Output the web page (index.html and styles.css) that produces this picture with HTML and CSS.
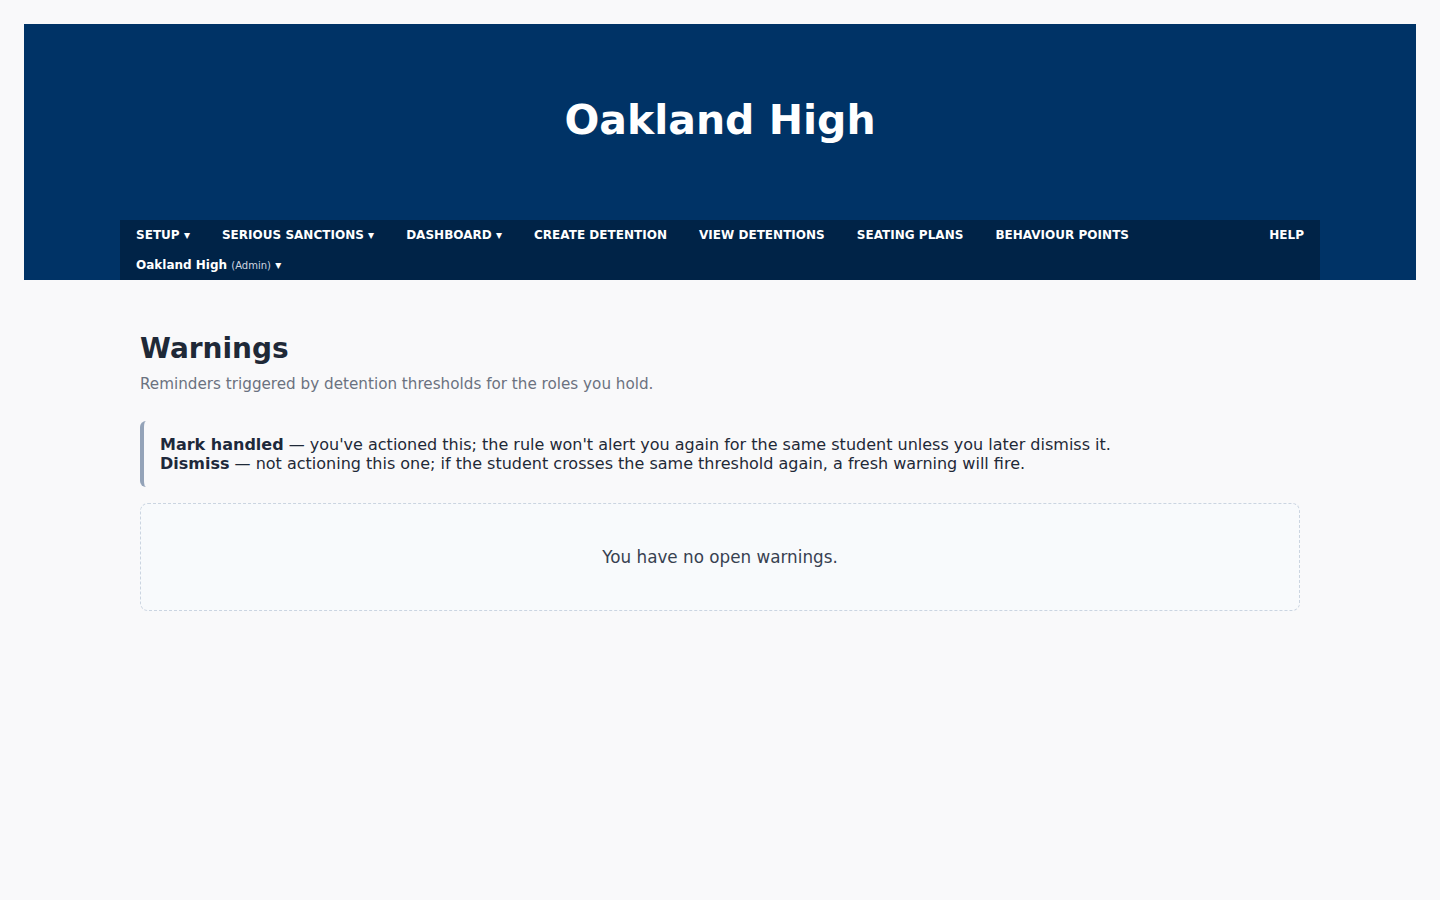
FILE: index.html
```html
<!DOCTYPE html>
<html lang="en">
<head>
  <meta charset="UTF-8" />
  <meta name="viewport" content="width=device-width, initial-scale=1.0"/>
  <title>Warnings – Oakland High</title>
  <link rel="stylesheet" href="styles.css">
</head>
<body>
  <header class="site-header">
    <h1 class="school-name">Oakland High</h1>
    <nav class="main-nav">
      <a href="#" class="nav-item">Setup <span class="caret">&#9662;</span></a>
      <a href="#" class="nav-item">Serious Sanctions <span class="caret">&#9662;</span></a>
      <a href="#" class="nav-item">Dashboard <span class="caret">&#9662;</span></a>
      <a href="#" class="nav-item">Create Detention</a>
      <a href="#" class="nav-item">View Detentions</a>
      <a href="#" class="nav-item">Seating Plans</a>
      <a href="#" class="nav-item">Behaviour Points</a>
      <a href="#" class="nav-item nav-help">Help</a>
      <a href="#" class="nav-user">Oakland High <span class="role">(Admin)</span> <span class="caret">&#9662;</span></a>
    </nav>
  </header>

  <main class="page">
    <h2 class="page-title">Warnings</h2>
    <p class="page-sub">Reminders triggered by detention thresholds for the roles you hold.</p>

    <div class="callout">
      <div><strong>Mark handled</strong> — you've actioned this; the rule won't alert you again for the same student unless you later dismiss it.</div>
      <div><strong>Dismiss</strong> — not actioning this one; if the student crosses the same threshold again, a fresh warning will fire.</div>
    </div>

    <div class="empty">You have no open warnings.</div>
  </main>
</body>
</html>
```

FILE: styles.css
```css
body, html {
  margin: 0;
  padding: 0;
  font-family: 'DejaVu Sans', sans-serif;
  background-color: #f9f9fa;
  color: #1f2937;
}
body {
  padding: 24px;
}
.site-header {
  background-color: #003366;
}
.school-name {
  margin: 0;
  padding: 72px 0 76px;
  text-align: center;
  color: #fff;
  font-size: 41px;
  line-height: 48px;
  font-weight: 700;
}
.main-nav {
  max-width: 1200px;
  margin: 0 auto;
  background-color: #002347;
  display: flex;
  flex-wrap: wrap;
  align-items: center;
}
.nav-item {
  padding: 0 16px;
  height: 30px;
  line-height: 30px;
  color: #fff;
  text-decoration: none;
  text-transform: uppercase;
  font-size: 12px;
  font-weight: 700;
  letter-spacing: 0.02px;
}
.caret {
  font-size: 12px;
}
.nav-help {
  margin-left: auto;
}
.nav-user {
  padding: 0 16px;
  height: 30px;
  line-height: 30px;
  color: #fff;
  text-decoration: none;
  font-size: 12px;
  font-weight: 700;
}
.nav-user .role {
  font-size: 10px;
  font-weight: 400;
  color: #cfd6e0;
}
.page {
  max-width: 1160px;
  margin: 0 auto;
  padding: 52px 20px;
}
.page-title {
  margin: 0;
  font-size: 28px;
  line-height: 34px;
  font-weight: 700;
  color: #1f2937;
}
.page-sub {
  margin: 9px 0 0;
  font-size: 15.2px;
  color: #6b7280;
}
.callout {
  margin-top: 28px;
  border-left: 4px solid #94a3b8;
  border-radius: 6px;
  padding: 14px 16px;
  font-size: 16px;
  line-height: 19px;
  color: #1f2937;
}
.callout strong {
  color: #1e293b;
}
.empty {
  margin-top: 16px;
  border: 1px dashed #cbd5e1;
  border-radius: 8px;
  background-color: #f8fafc;
  padding: 43px 20px;
  text-align: center;
  font-size: 16.8px;
  line-height: 20px;
  color: #374151;
}
```
